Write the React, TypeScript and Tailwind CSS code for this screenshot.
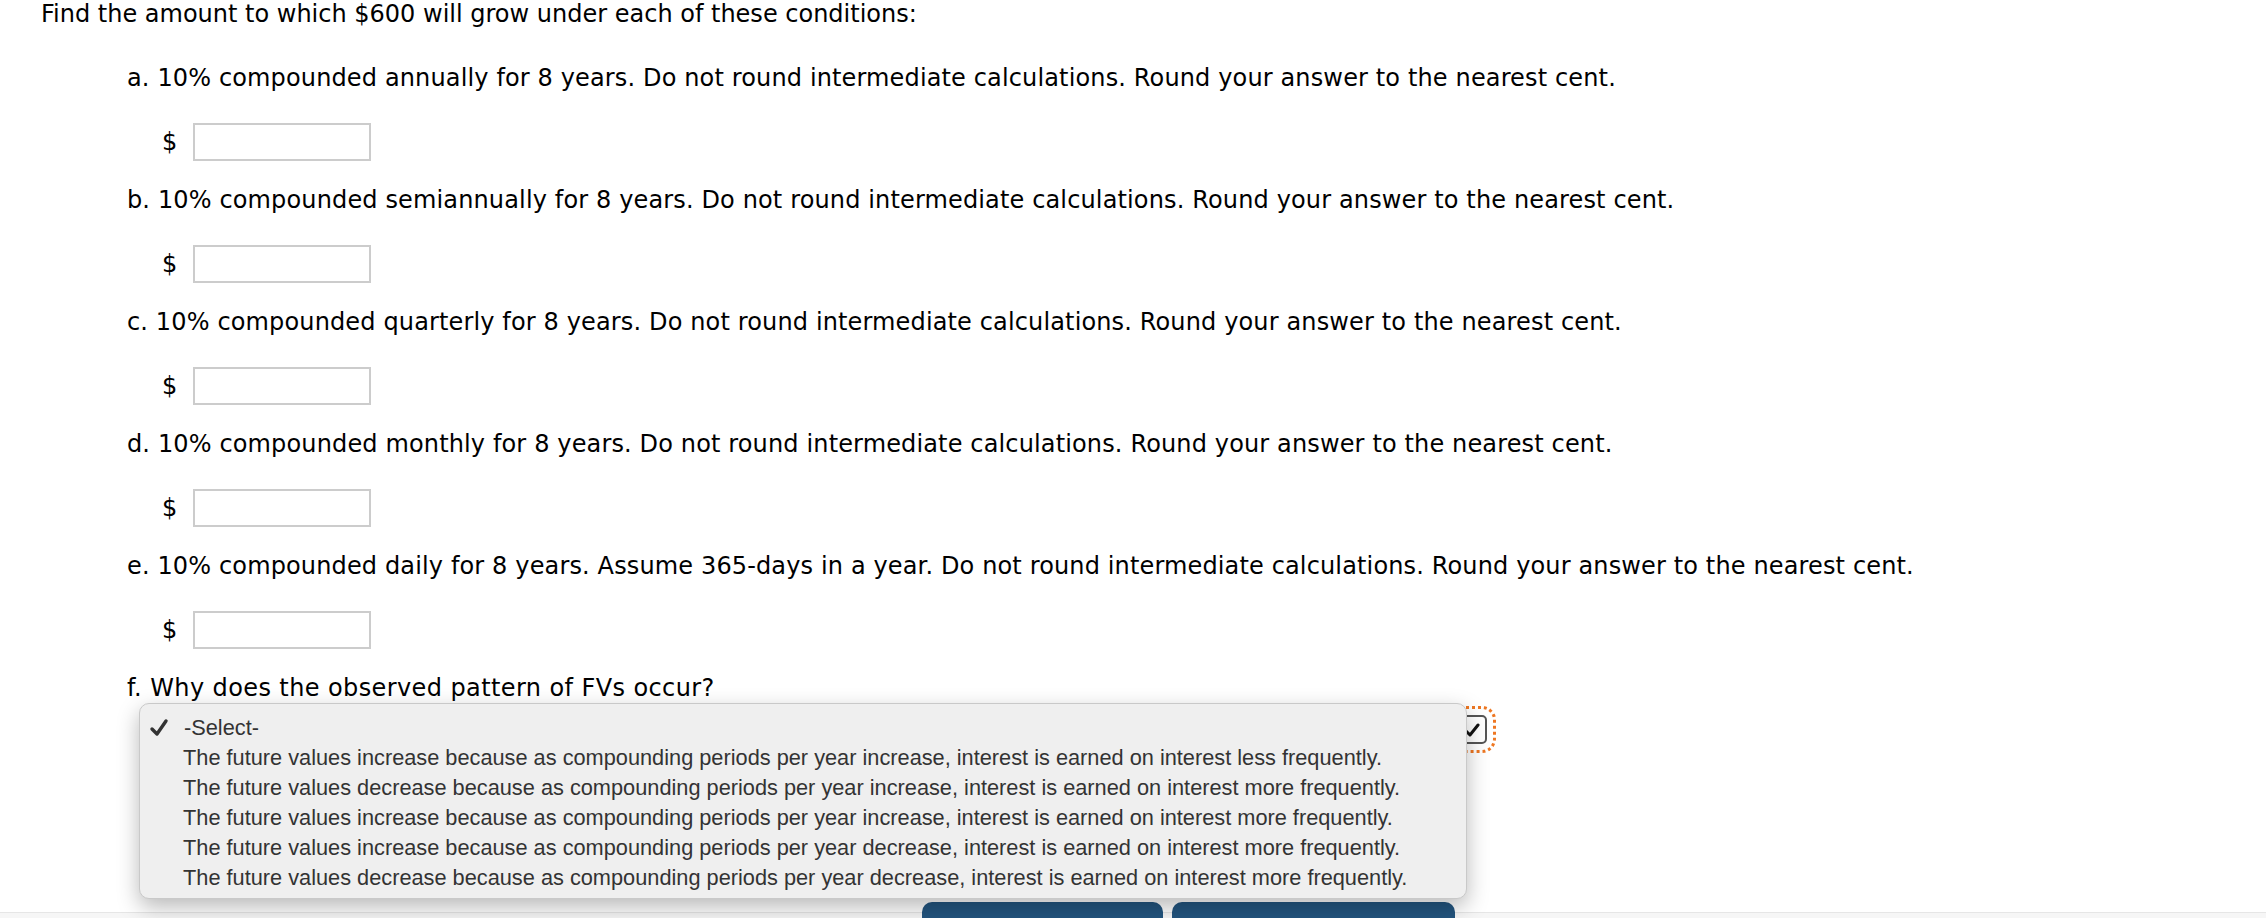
import React from 'react';

const questions = [
  'a. 10% compounded annually for 8 years. Do not round intermediate calculations. Round your answer to the nearest cent.',
  'b. 10% compounded semiannually for 8 years. Do not round intermediate calculations. Round your answer to the nearest cent.',
  'c. 10% compounded quarterly for 8 years. Do not round intermediate calculations. Round your answer to the nearest cent.',
  'd. 10% compounded monthly for 8 years. Do not round intermediate calculations. Round your answer to the nearest cent.',
  'e. 10% compounded daily for 8 years. Assume 365-days in a year. Do not round intermediate calculations. Round your answer to the nearest cent.',
];

const options = [
  'The future values increase because as compounding periods per year increase, interest is earned on interest less frequently.',
  'The future values decrease because as compounding periods per year increase, interest is earned on interest more frequently.',
  'The future values increase because as compounding periods per year increase, interest is earned on interest more frequently.',
  'The future values increase because as compounding periods per year decrease, interest is earned on interest more frequently.',
  'The future values decrease because as compounding periods per year decrease, interest is earned on interest more frequently.',
];

const Question = ({ text }: { text: string }) => (
  <div>
    <p className="h-[30px] leading-[30px] whitespace-nowrap">{text}</p>
    <div className="mt-[30px] flex h-[38px] items-center">
      <span className="ml-[35px] w-[31px]">$</span>
      <div className="h-[38px] w-[178px] border-2 border-[#cccccc] bg-white" />
    </div>
  </div>
);

export default function App() {
  return (
    <div
      className="relative h-[918px] w-full overflow-hidden bg-white text-[24px] tracking-[0.14px] text-black"
      style={{ fontFamily: '"DejaVu Sans", Verdana, sans-serif' }}
    >
      <p className="pl-[41px] text-[24px] leading-[28px] tracking-normal whitespace-nowrap">
        Find the amount to which $600 will grow under each of these conditions:
      </p>

      <div className="mt-[35px] flex flex-col gap-[24px] pl-[127px]">
        {questions.map((q) => (
          <Question key={q} text={q} />
        ))}

        <div>
          <p className="h-[30px] leading-[30px] tracking-[0.4px] whitespace-nowrap">f. Why does the observed pattern of FVs occur?</p>
          <div className="mt-[12px] ml-[56px] flex h-[29px] w-[1304px] items-center justify-end rounded-[5px] border-2 border-[#555555] bg-white pr-[5px] outline-[3px] outline-offset-[6px] outline-[#ee7722] outline-dotted">
            <svg width="16" height="16" viewBox="0 0 16 16">
              <path d="M2 9 L6 13 L14 3" fill="none" stroke="#111" strokeWidth="3" strokeLinecap="round" strokeLinejoin="round" />
            </svg>
          </div>
          <div className="relative z-10 mt-[158px] ml-[795px] flex gap-[9px]">
            <div className="h-[30px] w-[241px] rounded-t-[10px] bg-[#23557f]" />
            <div className="h-[30px] w-[283px] rounded-t-[10px] bg-[#23557f]" />
          </div>
        </div>
      </div>

      {/* page footer strip */}
      <div className="absolute inset-x-0 bottom-0 h-[6px] border-t border-[#e6e6e6] bg-[#f6f6f6]" />

      {/* open select list */}
      <div
        className="absolute left-[139px] top-[703px] z-20 h-[196px] w-[1328px] rounded-[10px] border border-[#c9c9c9] bg-[#efefef] py-[9px] text-[21.75px] tracking-normal text-[#333333] shadow-[0_8px_22px_rgba(0,0,0,0.28)]"
        style={{ fontFamily: '"Liberation Sans", Arial, sans-serif' }}
      >
        <div className="flex h-[30px] items-center">
          <svg width="20" height="20" viewBox="0 0 20 20" className="ml-[9px] mr-[15px]">
            <path d="M3 11 L8 16 L17 3" fill="none" stroke="#333" strokeWidth="3.4" strokeLinecap="round" strokeLinejoin="round" />
          </svg>
          <span>-Select-</span>
        </div>
        {options.map((o) => (
          <div key={o} className="flex h-[30px] items-center pl-[43px] whitespace-nowrap">
            {o}
          </div>
        ))}
      </div>
    </div>
  );
}
